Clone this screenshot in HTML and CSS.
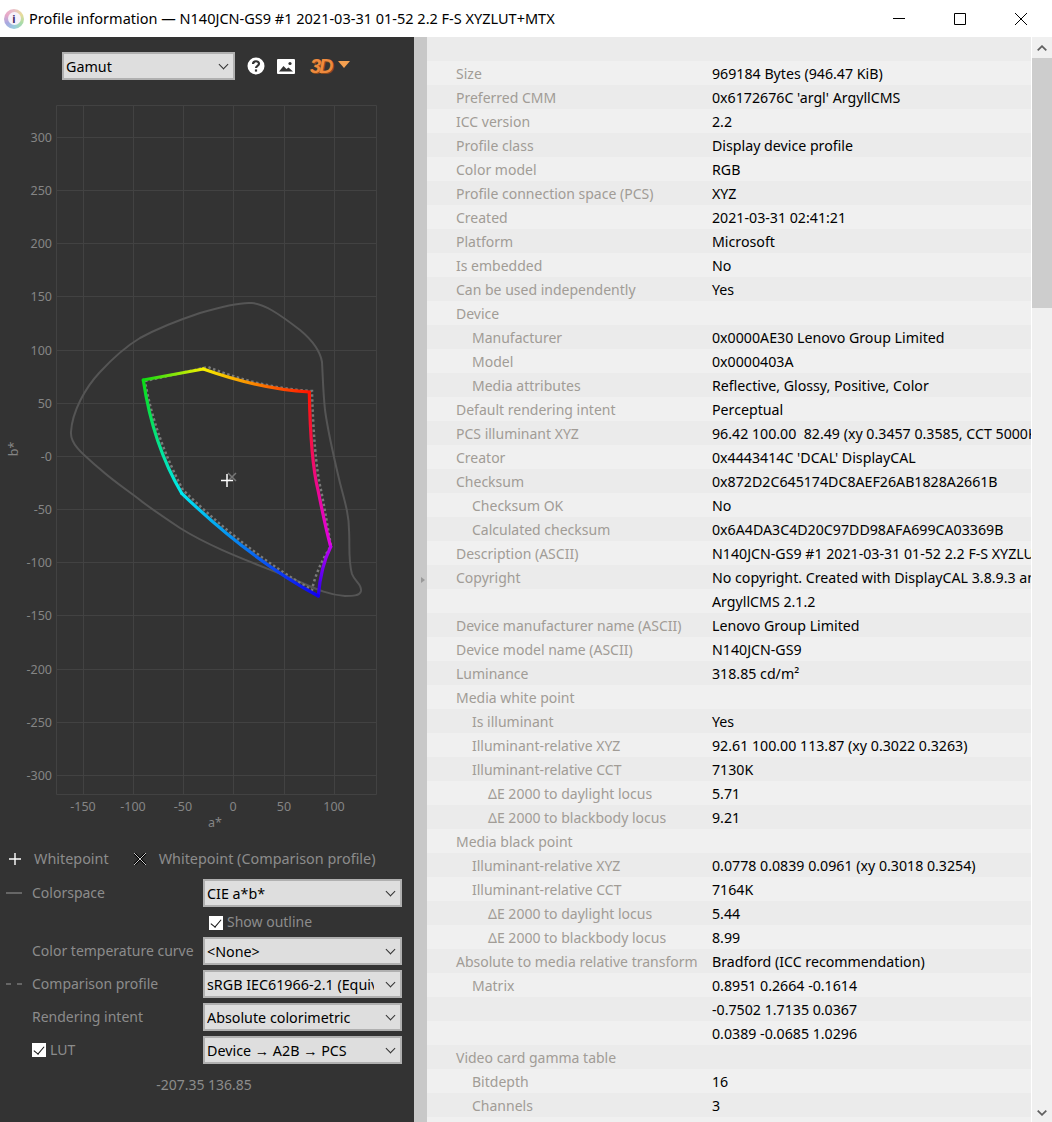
FILE: index.html
```html
<!DOCTYPE html>
<html lang="en">
  <head>
    <meta charset="UTF-8" />
    <title>Profile information</title>
    <link rel="stylesheet" href="styles.css">
  </head>
  <body>
    <!-- Title bar -->
    <header class="titlebar">
      <span class="app-icon"><span class="app-icon-i">i</span></span>
      <span class="title-text">Profile information — N140JCN-GS9 #1 2021-03-31 01-52 2.2 F-S XYZLUT+MTX</span>
      <div class="window-buttons">
        <svg width="12" height="12" viewBox="0 0 12 12"><path d="M0 5.5H12" stroke="#000" fill="none"/></svg>
        <svg width="12" height="12" viewBox="0 0 12 12"><path d="M.5.5H11.5V11.5H.5Z" stroke="#000" fill="none"/></svg>
        <svg width="12" height="12" viewBox="0 0 12 12"><path d="M0 0L12 12M12 0L0 12" stroke="#000" fill="none"/></svg>
      </div>
    </header>

    <main class="window">
      <!-- Left panel: gamut plot -->
      <section class="plot-panel">
        <div class="toolbar">
          <div class="select-wrap gamut-select"><select><option>Gamut</option></select></div>
          <svg class="tool-icon help" width="18" height="18" viewBox="0 0 18 18">
            <circle cx="9" cy="9" r="8.5" fill="#fff"/>
            <path d="M6 7C6 3.4 12 3.4 12 6.8C12 9 9 8.8 9 11" fill="none" stroke="#333" stroke-width="2.2"/>
            <rect x="7.9" y="12.4" width="2.2" height="2.2" fill="#333"/>
          </svg>
          <svg class="tool-icon picture" width="18" height="15" viewBox="0 0 18 15">
            <rect width="18" height="15" rx="1" fill="#fff"/>
            <path d="M2 12.5L6.5 7L9.5 10L11.5 8.5L16 12.5Z" fill="#333"/>
            <circle cx="13" cy="4.5" r="1.6" fill="#333"/>
          </svg>
          <span class="three-d">3D</span>
          <span class="three-d-arrow"></span>
        </div>

        <svg class="plot" width="414" height="770" viewBox="0 80 414 770">
          <defs>
            <linearGradient id="edgeGY" gradientUnits="userSpaceOnUse" x1="143" y1="380" x2="203" y2="369"><stop offset="0" stop-color="#0bdc12"/><stop offset="1" stop-color="#f5f000"/></linearGradient>
            <linearGradient id="edgeYR" gradientUnits="userSpaceOnUse" x1="203" y1="369" x2="309" y2="392"><stop offset="0" stop-color="#f5f000"/><stop offset="1" stop-color="#ff1500"/></linearGradient>
            <linearGradient id="edgeRM" gradientUnits="userSpaceOnUse" x1="309" y1="392" x2="331" y2="547"><stop offset="0" stop-color="#ff1500"/><stop offset="1" stop-color="#e000e8"/></linearGradient>
            <linearGradient id="edgeMB" gradientUnits="userSpaceOnUse" x1="331" y1="547" x2="318" y2="596"><stop offset="0" stop-color="#c000f0"/><stop offset="1" stop-color="#2000f0"/></linearGradient>
            <linearGradient id="edgeBC" gradientUnits="userSpaceOnUse" x1="318" y1="596" x2="182" y2="493"><stop offset="0" stop-color="#1000f0"/><stop offset="1" stop-color="#00e8f0"/></linearGradient>
            <linearGradient id="edgeCG" gradientUnits="userSpaceOnUse" x1="182" y1="493" x2="143" y2="380"><stop offset="0" stop-color="#00e8f0"/><stop offset="1" stop-color="#0bdc12"/></linearGradient>
          </defs>

          <!-- grid -->
          <g class="grid">
            <path d="M56.5 105.5H376.5V794.5H56.5Z"/>
            <path d="M83.5 105V794M133.5 105V794M183.5 105V794M233.5 105V794M284.5 105V794M334.5 105V794"/>
            <path d="M56 137.5H377M56 190.5H377M56 243.5H377M56 296.5H377M56 350.5H377M56 403.5H377M56 456.5H377M56 509.5H377M56 562.5H377M56 615.5H377M56 669.5H377M56 722.5H377M56 775.5H377"/>
          </g>

          <!-- axis labels -->
          <g class="ticks-y">
            <text x="52" y="142">300</text><text x="52" y="195">250</text><text x="52" y="248">200</text>
            <text x="52" y="301">150</text><text x="52" y="355">100</text><text x="52" y="408">50</text>
            <text x="52" y="461">-0</text><text x="52" y="514">-50</text><text x="52" y="567">-100</text>
            <text x="52" y="620">-150</text><text x="52" y="674">-200</text><text x="52" y="727">-250</text>
            <text x="52" y="780">-300</text>
          </g>
          <g class="ticks-x">
            <text x="83" y="811">-150</text><text x="133" y="811">-100</text><text x="183" y="811">-50</text>
            <text x="233" y="811">0</text><text x="284" y="811">50</text><text x="334" y="811">100</text>
            <text x="215" y="827">a*</text>
          </g>
          <text class="axis-b" transform="translate(18 449) rotate(-90)">b*</text>

          <!-- colorspace outline -->
          <path class="outline" d="M100 372C113 358 125 347 140 338C160 327 185 318 200 313C220 307 240 302 252 303C264 304 278 313 300 330C312 340 320 350 322 362C323 380 323 390 325 410C328 432 334 458 340 483C345 502 349 515 349 530C350 545 348 560 352 574C355 582 362 584 361 591C360 596 352 596 345 596C330 595 318 590 300 582C260 565 215 550 180 528C165 518 150 508 140 500C127 490 112 480 100 469C85 456 70 445 71 432C72 412 85 388 100 372"/>

          <!-- comparison profile -->
          <path class="compare" d="M145 381L208 367C240 380 275 389 312 391C313 430 316 470 321 490C325 510 328 530 331 546C322 560 315 575 312 590C270 566 226 532 183 490C167 460 152 422 145 381"/>

          <!-- gamut boundary -->
          <g class="gamut">
            <path d="M143.3 380L203.3 369" stroke="url(#edgeGY)"/>
            <path d="M203.3 369C240 382 275 390 309.3 392" stroke="url(#edgeYR)"/>
            <path d="M309.3 392C310 430 313 470 318 490C322 510 326 530 330.7 546.7" stroke="url(#edgeRM)"/>
            <path d="M330.7 546.7C324 560 320 575 318.3 596" stroke="url(#edgeMB)"/>
            <path d="M318.3 596C270 570 225 535 181.7 493.3" stroke="url(#edgeBC)"/>
            <path d="M181.7 493.3C165 465 150 425 143.3 380" stroke="url(#edgeCG)"/>
          </g>

          <!-- whitepoints -->
          <path class="wp-compare" d="M228 473L236 481M236 473L228 481"/>
          <path class="wp" d="M221 480.5H233M227 474V487"/>
        </svg>

        <div class="legend">
          <svg width="12" height="12" viewBox="0 0 12 12"><path d="M0 6H12M6 0V12" stroke="#fff" stroke-width="1.4" fill="none"/></svg>
          <span class="legend-one">Whitepoint</span>
          <svg width="12" height="12" viewBox="0 0 12 12"><path d="M0 0L12 12M12 0L0 12" stroke="#000" stroke-width="2.4" fill="none"/><path d="M0 0L12 12M12 0L0 12" stroke="#ccc" stroke-width="1" fill="none"/></svg>
          <span>Whitepoint (Comparison profile)</span>
        </div>

        <div class="controls">
          <div class="control-row">
            <span class="line-sample solid"></span>
            <label>Colorspace</label>
            <div class="select-wrap"><select><option>CIE a*b*</option></select></div>
          </div>
          <div class="outline-row">
            <span class="check"></span>
            <span>Show outline</span>
          </div>
          <div class="control-row">
            <span class="line-sample"></span>
            <label>Color temperature curve</label>
            <div class="select-wrap"><select><option>&lt;None&gt;</option></select></div>
          </div>
          <div class="control-row spaced">
            <span class="line-sample dashed"></span>
            <label>Comparison profile</label>
            <div class="select-wrap"><select><option>sRGB IEC61966-2.1 (Equivalent to www.srgb.com 1998 HP profile)</option></select></div>
          </div>
          <div class="control-row spaced">
            <span class="line-sample"></span>
            <label>Rendering intent</label>
            <div class="select-wrap"><select><option>Absolute colorimetric</option></select></div>
          </div>
          <div class="control-row spaced">
            <span class="line-sample"></span>
            <label class="lut-label"><span class="check"></span>LUT</label>
            <div class="select-wrap"><select><option>Device → A2B → PCS</option></select></div>
          </div>
        </div>

        <div class="coords">-207.35 136.85</div>
      </section>

      <!-- Divider -->
      <div class="sash"><span class="sash-arrow"></span></div>

      <!-- Right panel: profile info -->
      <section class="info-panel">
        <div class="info-table">
          <div class="row"><span class="key"></span><span class="val"></span></div>
          <div class="row"><span class="key">Size</span><span class="val">969184 Bytes (946.47 KiB)</span></div>
          <div class="row"><span class="key">Preferred CMM</span><span class="val">0x6172676C 'argl' ArgyllCMS</span></div>
          <div class="row"><span class="key">ICC version</span><span class="val">2.2</span></div>
          <div class="row"><span class="key">Profile class</span><span class="val">Display device profile</span></div>
          <div class="row"><span class="key">Color model</span><span class="val">RGB</span></div>
          <div class="row"><span class="key">Profile connection space (PCS)</span><span class="val">XYZ</span></div>
          <div class="row"><span class="key">Created</span><span class="val">2021-03-31 02:41:21</span></div>
          <div class="row"><span class="key">Platform</span><span class="val">Microsoft</span></div>
          <div class="row"><span class="key">Is embedded</span><span class="val">No</span></div>
          <div class="row"><span class="key">Can be used independently</span><span class="val">Yes</span></div>
          <div class="row"><span class="key">Device</span><span class="val"></span></div>
          <div class="row"><span class="key in1">Manufacturer</span><span class="val">0x0000AE30 Lenovo Group Limited</span></div>
          <div class="row"><span class="key in1">Model</span><span class="val">0x0000403A</span></div>
          <div class="row"><span class="key in1">Media attributes</span><span class="val">Reflective, Glossy, Positive, Color</span></div>
          <div class="row"><span class="key">Default rendering intent</span><span class="val">Perceptual</span></div>
          <div class="row"><span class="key">PCS illuminant XYZ</span><span class="val">96.42 100.00&nbsp; 82.49 (xy 0.3457 0.3585, CCT 5000K)</span></div>
          <div class="row"><span class="key">Creator</span><span class="val">0x4443414C 'DCAL' DisplayCAL</span></div>
          <div class="row"><span class="key">Checksum</span><span class="val">0x872D2C645174DC8AEF26AB1828A2661B</span></div>
          <div class="row"><span class="key in1">Checksum OK</span><span class="val">No</span></div>
          <div class="row"><span class="key in1">Calculated checksum</span><span class="val">0x6A4DA3C4D20C97DD98AFA699CA03369B</span></div>
          <div class="row"><span class="key">Description (ASCII)</span><span class="val">N140JCN-GS9 #1 2021-03-31 01-52 2.2 F-S XYZLUT+MTX</span></div>
          <div class="row"><span class="key">Copyright</span><span class="val">No copyright. Created with DisplayCAL 3.8.9.3 and</span></div>
          <div class="row"><span class="key"></span><span class="val">ArgyllCMS 2.1.2</span></div>
          <div class="row"><span class="key">Device manufacturer name (ASCII)</span><span class="val">Lenovo Group Limited</span></div>
          <div class="row"><span class="key">Device model name (ASCII)</span><span class="val">N140JCN-GS9</span></div>
          <div class="row"><span class="key">Luminance</span><span class="val">318.85 cd/m²</span></div>
          <div class="row"><span class="key">Media white point</span><span class="val"></span></div>
          <div class="row"><span class="key in1">Is illuminant</span><span class="val">Yes</span></div>
          <div class="row"><span class="key in1">Illuminant-relative XYZ</span><span class="val">92.61 100.00 113.87 (xy 0.3022 0.3263)</span></div>
          <div class="row"><span class="key in1">Illuminant-relative CCT</span><span class="val">7130K</span></div>
          <div class="row"><span class="key in2">ΔE 2000 to daylight locus</span><span class="val">5.71</span></div>
          <div class="row"><span class="key in2">ΔE 2000 to blackbody locus</span><span class="val">9.21</span></div>
          <div class="row"><span class="key">Media black point</span><span class="val"></span></div>
          <div class="row"><span class="key in1">Illuminant-relative XYZ</span><span class="val">0.0778 0.0839 0.0961 (xy 0.3018 0.3254)</span></div>
          <div class="row"><span class="key in1">Illuminant-relative CCT</span><span class="val">7164K</span></div>
          <div class="row"><span class="key in2">ΔE 2000 to daylight locus</span><span class="val">5.44</span></div>
          <div class="row"><span class="key in2">ΔE 2000 to blackbody locus</span><span class="val">8.99</span></div>
          <div class="row"><span class="key">Absolute to media relative transform</span><span class="val">Bradford (ICC recommendation)</span></div>
          <div class="row"><span class="key in1">Matrix</span><span class="val">0.8951 0.2664 -0.1614</span></div>
          <div class="row"><span class="key"></span><span class="val">-0.7502 1.7135 0.0367</span></div>
          <div class="row"><span class="key"></span><span class="val">0.0389 -0.0685 1.0296</span></div>
          <div class="row"><span class="key">Video card gamma table</span><span class="val"></span></div>
          <div class="row"><span class="key in1">Bitdepth</span><span class="val">16</span></div>
          <div class="row"><span class="key in1">Channels</span><span class="val">3</span></div>
          <div class="row"><span class="key"></span><span class="val"></span></div>
        </div>
        <div class="scrollbar">
          <svg class="scroll-arrow" width="10" height="6" viewBox="0 0 10 6"><path d="M.7 5.3L5 1.2L9.3 5.3" fill="none" stroke="#606060" stroke-width="1.8"/></svg>
          <div class="scroll-thumb"></div>
          <svg class="scroll-arrow bottom" width="10" height="6" viewBox="0 0 10 6"><path d="M.7 .7L5 4.8L9.3 .7" fill="none" stroke="#606060" stroke-width="1.8"/></svg>
        </div>
      </section>
    </main>
  </body>
</html>
```

FILE: styles.css
```css
/* Basis halaman */
html, body {
  height: 100%;
}

body {
  margin: 0;
  overflow: hidden;
  background: #fff;
  font-family: "Noto Sans", Arial, sans-serif;
  font-size: 14px;
  color: #000;
}

/* Title bar */
.titlebar {
  display: flex;
  align-items: center;
  height: 37px;
  padding-left: 4px;
  background: #fff;
}

.app-icon {
  display: flex;
  align-items: center;
  justify-content: center;
  width: 20px;
  height: 20px;
  flex: none;
  border-radius: 50%;
  background: conic-gradient(#e8c0c8, #e8dc9a, #a8dca8, #98cce0, #a8a8e0, #e8a8c8, #e8c0c8);
}

.app-icon-i {
  width: 13px;
  height: 13px;
  border-radius: 50%;
  background: #f6f2fa;
  color: #3d2a6a;
  font-size: 11px;
  font-weight: 700;
  line-height: 13px;
  text-align: center;
}

.title-text {
  margin-left: 5px;
  margin-top: -2px;
  font-size: 14.5px;
  white-space: nowrap;
}

.window-buttons {
  display: flex;
  gap: 49px;
  margin-left: auto;
  margin-right: 25px;
}

/* Layout utama */
.window {
  display: flex;
  height: 1085px;
}

.plot-panel {
  width: 414px;
  flex: none;
  background: #333;
  color: #8c8c8c;
  overflow: hidden;
}

.toolbar {
  display: flex;
  align-items: center;
  height: 28px;
  margin-top: 15px;
  padding-left: 62px;
}

.tool-icon {
  flex: none;
}

.help {
  margin-left: 12px;
}

.picture {
  margin-left: 12px;
}

.three-d {
  margin-left: 15px;
  color: #ee8a3e;
  font-family: "Liberation Sans", Arial, sans-serif;
  font-size: 20px;
  font-weight: 700;
  font-style: italic;
  letter-spacing: -2px;
  text-shadow: 1px 1px 0 #8a4a1c;
}

.three-d-arrow {
  width: 0;
  height: 0;
  margin-left: 6px;
  margin-top: -3px;
  border-left: 6px solid transparent;
  border-right: 6px solid transparent;
  border-top: 7px solid #f5a050;
}

/* Select */
.select-wrap {
  position: relative;
  width: 199px;
  height: 28px;
  flex: none;
}

.gamut-select {
  width: 173px;
}

.select-wrap select {
  appearance: none;
  width: 100%;
  height: 100%;
  padding: 0 26px 0 2px;
  border: 2px solid #b0b0b0;
  border-radius: 0;
  background: #dedede;
  color: #000;
  font-family: inherit;
  font-size: 14.3px;
  outline: none;
}

.select-wrap::after {
  content: "";
  position: absolute;
  top: 9px;
  right: 8px;
  width: 6px;
  height: 6px;
  border-right: 1px solid #333;
  border-bottom: 1px solid #333;
  transform: rotate(45deg);
  pointer-events: none;
}

/* Plot */
.plot {
  display: block;
  margin-top: 0;
}

.grid path {
  fill: none;
  stroke: #424242;
  stroke-width: 1;
}

.plot text {
  fill: #858585;
  font-family: "Noto Sans", Arial, sans-serif;
  font-size: 12.5px;
}

.ticks-y text {
  text-anchor: end;
}

.ticks-x text {
  text-anchor: middle;
}

.axis-b {
  text-anchor: middle;
}

.outline {
  fill: none;
  stroke: #555;
  stroke-width: 2;
}

.compare {
  fill: none;
  stroke: #7a7a7a;
  stroke-width: 2.5;
  stroke-dasharray: 2.5 2.5;
}

.gamut path {
  fill: none;
  stroke-width: 3.2;
  stroke-linecap: round;
  stroke-linejoin: round;
}

.wp {
  fill: none;
  stroke: #fff;
  stroke-width: 1.5;
}

.wp-compare {
  fill: none;
  stroke: #777;
  stroke-width: 1.5;
}

/* Legend */
.legend {
  display: flex;
  align-items: center;
  gap: 7px;
  height: 20px;
  margin-top: -1px;
  padding-left: 9px;
  font-size: 14.4px;
  line-height: 18px;
  white-space: nowrap;
}

.legend svg {
  margin-right: 6px;
}

.legend-one {
  margin-right: 18px;
}

/* Kontrol di bawah plot */
.controls {
  display: flex;
  flex-direction: column;
  margin-top: 10px;
}

.control-row {
  display: flex;
  align-items: center;
  height: 28px;
}

.control-row.spaced {
  margin-top: 5px;
}

.control-row label {
  width: 171px;
  margin-top: -2px;
  white-space: nowrap;
  flex: none;
}

.line-sample {
  width: 16px;
  height: 2px;
  margin-left: 6px;
  margin-right: 10px;
  flex: none;
}

.line-sample.solid {
  background: #666;
}

.line-sample.dashed {
  background: linear-gradient(90deg, #666 0 5px, transparent 5px 11px, #666 11px);
}

.lut-label {
  display: flex;
  align-items: center;
  gap: 4px;
}

.outline-row {
  display: flex;
  align-items: center;
  gap: 4px;
  height: 30px;
  padding-left: 209px;
  line-height: 18px;
}

.check {
  position: relative;
  width: 14px;
  height: 14px;
  flex: none;
  margin-top: 2px;
  background: #fff;
}

.check::after {
  content: "";
  position: absolute;
  left: 4px;
  top: 1px;
  width: 5px;
  height: 9px;
  border-right: 1.5px solid #111;
  border-bottom: 1.5px solid #111;
  transform: rotate(40deg);
}

.coords {
  margin-top: 11px;
  padding-right: 6px;
  text-align: center;
}

/* Divider */
.sash {
  display: flex;
  align-items: flex-start;
  width: 13px;
  flex: none;
  background: #c8c8c8;
}

.sash-arrow {
  width: 0;
  height: 0;
  margin-top: 540px;
  margin-left: 7px;
  border-top: 3.5px solid transparent;
  border-bottom: 3.5px solid transparent;
  border-left: 4px solid #999;
}

/* Tabel info profil */
.info-panel {
  display: flex;
  flex: 1;
  min-width: 0;
}

.info-table {
  width: 604px;
  flex: none;
  overflow: hidden;
}

.row {
  display: flex;
  height: 24px;
  line-height: 25px;
  white-space: nowrap;
  background: #f0f0f0;
}

.row:nth-child(odd) {
  background: #ebebeb;
}

.key {
  box-sizing: border-box;
  width: 285px;
  flex: none;
  padding-left: 29px;
  color: #a19c96;
}

.key.in1 {
  padding-left: 45px;
}

.key.in2 {
  padding-left: 61px;
}

.val {
  font-size: 14.2px;
  color: #000;
}

/* Scrollbar */
.scrollbar {
  position: relative;
  flex: 1;
  margin-left: 1px;
  background: #f0f0f0;
}

.scroll-arrow {
  position: absolute;
  top: 8px;
  left: 5px;
}

.scroll-arrow.bottom {
  top: auto;
  bottom: 6px;
}

.scroll-thumb {
  height: 250px;
  margin-top: 21px;
  background: #cdcdcd;
}
```
